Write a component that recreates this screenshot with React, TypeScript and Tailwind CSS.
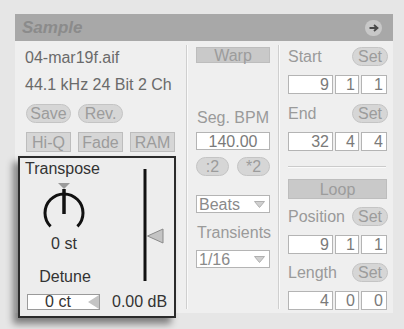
const FONT = { fontFamily: '"Liberation Sans", Arial, sans-serif' };

const pill =
  'h-[19px] rounded-full bg-[#d6d6d6] border border-[#c4c4c4] text-[#9c9c9c] text-[16px] leading-[17px] flex items-center justify-center';
const flat =
  'bg-[#c9c9c9] border border-[#bdbdbd] text-[#9c9c9c] text-[16px] leading-[17px] flex items-center justify-center';
const field =
  'h-[19px] bg-white border border-[#b4b4b4] text-[#7a7a7a] text-[16px] leading-[17px] flex items-center justify-end pr-[3px]';

function LabelSet({ label, mt }: { label: string; mt: string }) {
  return (
    <div className={`flex items-center justify-between h-[19px] ${mt}`}>
      <span className="text-[16px] leading-[18px] text-[#9a9a9a]">{label}</span>
      <div className={`${pill} w-[36px]`}>Set</div>
    </div>
  );
}

function Triple({ a, b, c }: { a: string; b: string; c: string }) {
  return (
    <div className="flex gap-[2px] mt-[9px]">
      <div className={`${field} w-[45px]`}>{a}</div>
      <div className={`${field} w-[24px]`}>{b}</div>
      <div className={`${field} w-[26px]`}>{c}</div>
    </div>
  );
}

function Chooser({ value, mt }: { value: string; mt: string }) {
  return (
    <div className={`h-[18px] bg-white border border-[#b4b4b4] flex items-center justify-between pl-[2px] pr-[4px] ${mt}`}>
      <span className="text-[16px] leading-[17px] text-[#8a8a8a]">{value}</span>
      <svg width="11" height="7" viewBox="0 0 11 7">
        <polygon points="0.5,0.5 10.5,0.5 5.5,6.5" fill="#d0d0d0" stroke="#b0b0b0" />
      </svg>
    </div>
  );
}

function Divider() {
  return (
    <div className="flex my-[4px]">
      <div className="w-px bg-[#cfcfcf]" />
      <div className="w-px bg-[#fafafa]" />
    </div>
  );
}

export default function App() {
  return (
    <div className="w-[404px] h-[329px] bg-[#e6e6e6] overflow-hidden pt-[14px] pl-[15px]" style={FONT}>
      <div className="w-[378px]">
        {/* title bar */}
        <div className="h-[27px] bg-[#a8a8a8] flex items-center justify-between pl-[7px] pr-[11px]">
          <span className="text-[17px] font-bold italic text-[#8b8b8b] leading-[20px]">Sample</span>
          <div className="w-[17px] h-[16px] rounded-full bg-[#c8c8c8] flex items-center justify-center">
            <svg width="10" height="8" viewBox="0 0 10 8">
              <path d="M0.5 4 H8 M5 1 L8.5 4 L5 7" stroke="#4a4a4a" strokeWidth="1.8" fill="none" />
            </svg>
          </div>
        </div>

        {/* body */}
        <div className="h-[272px] bg-[#efefef] flex">
          {/* left column */}
          <div className="w-[171px] pl-[10px] pt-[8px] text-[16px]">
            <div className="leading-[18px] text-[#6a6a6a]">04-mar19f.aif</div>
            <div className="leading-[18px] text-[#6a6a6a] mt-[9px]">44.1 kHz 24 Bit 2 Ch</div>
            <div className="flex gap-[7px] mt-[10px] ml-[1px]">
              <div className={`${pill} w-[45px]`}>Save</div>
              <div className={`${pill} w-[45px]`}>Rev.</div>
            </div>
            <div className="flex gap-[7px] mt-[9px] ml-[1px]">
              <div className={`${flat} bg-[#d6d6d6] w-[45px] h-[20px]`}>Hi-Q</div>
              <div className={`${flat} bg-[#d6d6d6] w-[45px] h-[20px]`}>Fade</div>
              <div className={`${flat} bg-[#d6d6d6] w-[45px] h-[20px]`}>RAM</div>
            </div>

            {/* transpose box */}
            <div className="relative -ml-[7px] mt-[4px] w-[158px] h-[162px] border-2 border-[#2b2b2b] bg-[#ededed] shadow-[-5px_6px_7px_rgba(0,0,0,0.45)] pl-[5px] pt-[2px] text-[#333]">
              <div className="flex">
                <div className="w-[113px]">
                  <div className="leading-[18px]">Transpose</div>
                  <svg className="ml-[14px] mt-[5px]" width="50" height="52" viewBox="0 0 50 52">
                    <polygon points="19,0 31,0 25,6" fill="#9a9a9a" />
                    <path d="M11.6 43.4 A19 19 0 1 1 38.4 43.4" stroke="#111" strokeWidth="3" fill="none" />
                    <line x1="25" y1="6" x2="25" y2="31" stroke="#111" strokeWidth="3.5" />
                  </svg>
                  <div className="ml-[14px] w-[50px] text-center leading-[18px]">0 st</div>
                  <div className="w-[80px] text-center leading-[18px] mt-[15px]">Detune</div>
                </div>
                <svg className="mt-[9px]" width="26" height="115" viewBox="0 0 26 115">
                  <line x1="7" y1="0" x2="7" y2="112" stroke="#111" strokeWidth="3" />
                  <polygon points="9.5,67 25,60 25,74" fill="#c4c4c4" stroke="#8a8a8a" />
                </svg>
              </div>
              <div className="flex items-center mt-[7px]">
                <div className="ml-[2px] w-[73px] h-[16px] bg-white border border-[#9a9a9a] flex items-center">
                  <span className="flex-1 text-center leading-[16px]">0 ct</span>
                  <svg width="11" height="14" viewBox="0 0 11 14">
                    <polygon points="0,7 11,0 11,14" fill="#c4c4c4" />
                  </svg>
                </div>
                <span className="ml-[12px] leading-[18px]">0.00 dB</span>
              </div>
            </div>
          </div>

          <Divider />

          {/* middle column */}
          <div className="w-[90px] pl-[8px] pt-[6px]">
            <div className={`${flat} w-[74px] h-[16px]`}>Warp</div>
            <div className="mt-[46px] pl-[1px] text-[16px] leading-[18px] text-[#9a9a9a] whitespace-nowrap">Seg. BPM</div>
            <div className="mt-[5px] w-[74px] h-[18px] bg-white border border-[#b4b4b4] text-[16px] leading-[17px] text-[#7a7a7a] flex items-center justify-center">
              140.00
            </div>
            <div className="mt-[7px] w-[74px] flex justify-between">
              <div className={`${pill} w-[33px] h-[17px]`}>:2</div>
              <div className={`${pill} w-[33px] h-[17px]`}>*2</div>
            </div>
            <div className="w-[74px]">
              <Chooser value="Beats" mt="mt-[19px]" />
            </div>
            <div className="mt-[11px] pl-[1px] text-[16px] leading-[18px] text-[#9a9a9a]">Transients</div>
            <div className="w-[74px]">
              <Chooser value="1/16" mt="mt-[8px]" />
            </div>
          </div>

          <Divider />

          {/* right column */}
          <div className="w-[110px] pl-[8px] pt-[6px]">
            <div className="w-[100px]">
              <LabelSet label="Start" mt="" />
              <Triple a="9" b="1" c="1" />
              <LabelSet label="End" mt="mt-[10px]" />
              <Triple a="32" b="4" c="4" />
              <div className="mt-[15px] h-[2px] border-t border-[#cbcbcb] border-b border-b-[#fafafa] w-[98px]" />
              <div className={`${flat} mt-[11px] w-[99px] h-[20px]`}>Loop</div>
              <LabelSet label="Position" mt="mt-[8px]" />
              <Triple a="9" b="1" c="1" />
              <LabelSet label="Length" mt="mt-[9px]" />
              <Triple a="4" b="0" c="0" />
            </div>
          </div>
        </div>
      </div>
    </div>
  );
}
